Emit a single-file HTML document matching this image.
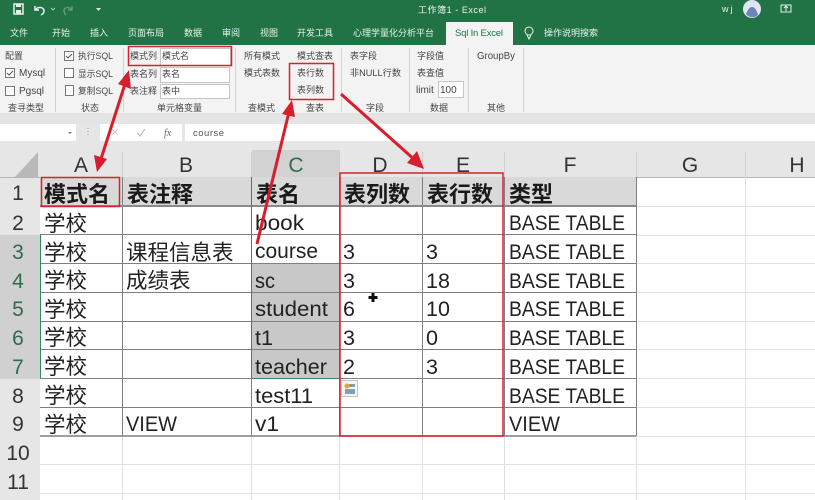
<!DOCTYPE html>
<html><head><meta charset="utf-8"><style>
html,body{margin:0;padding:0;width:815px;height:500px;overflow:hidden;background:#fff}
svg{display:block;filter:blur(.35px)}
text{font-family:"Liberation Sans","Noto Sans CJK SC",sans-serif}
.r{font-size:9px;fill:#454545}
.l{font-size:10px;fill:#454545}
.t{font-size:9px;fill:#e8f2ec}
.c{font-size:21.5px;fill:#222}
.b{font-size:22px;font-weight:bold;fill:#1a1a1a}
.h{font-size:21px;fill:#333;text-anchor:middle}
</style></head><body>
<svg width="815" height="500" viewBox="0 0 815 500" xmlns="http://www.w3.org/2000/svg">
<!-- title + tabs -->
<rect width="815" height="45" fill="#217346"/>
<rect x="14" y="4" width="9" height="10" fill="none" stroke="#e8f2ec" stroke-width="1.5"/>
<rect x="16" y="4" width="5" height="3" fill="#e8f2ec"/><rect x="16" y="10" width="5" height="4" fill="#e8f2ec"/>
<path d="M35 6v4h4M35 10c3-4 9-3 9 1 0 2-1 3-3 4" fill="none" stroke="#e8f2ec" stroke-width="1.5"/>
<path d="M51 8l2 2 2-2" fill="none" stroke="#a9cbb8"/>
<path d="M72 6v4h-4M72 10c-3-4-8-3-8 1 0 2 1 3 2 4" fill="none" stroke="#5f9a7b" stroke-width="1.5"/>
<path d="M96 8h5l-2.500 3z" fill="#d8e8df"/>
<text x="418" y="13" class="t" textLength="68">工作簿1 - Excel</text>
<text x="722" y="12" class="t" style="letter-spacing:2px">wj</text>
<circle cx="752" cy="9" r="9" fill="#dfe6f2"/><path d="M746 14c2-5 4-7 6-7 3 0 5 4 6 8-3 3-9 3-12-1z" fill="#6d84b8"/>
<rect x="781" y="5" width="10" height="7" fill="none" stroke="#e8f2ec"/><path d="M786 6v5M784 8l2-2 2 2" fill="none" stroke="#e8f2ec"/>
<text x="10" y="36" class="t">文件</text><text x="52" y="36" class="t">开始</text><text x="90" y="36" class="t">插入</text>
<text x="128" y="36" class="t">页面布局</text><text x="184" y="36" class="t">数据</text><text x="222" y="36" class="t">审阅</text>
<text x="260" y="36" class="t">视图</text><text x="297" y="36" class="t">开发工具</text><text x="353" y="36" class="t">心理学量化分析平台</text>
<text x="544" y="36" class="t">操作说明搜索</text>
<rect x="446" y="22" width="67" height="23" fill="#f3f3f3"/>
<text x="455" y="36" style="font-size:9.500px;fill:#217346" textLength="48">Sql In Excel</text>
<circle cx="529" cy="31" r="4" fill="none" stroke="#e8f2ec"/><path d="M527 35l2 4 2-4" fill="none" stroke="#e8f2ec"/>
<!-- ribbon -->
<rect y="45" width="815" height="68" fill="#f3f3f3"/>
<rect y="113" width="815" height="11" fill="#e4e4e4"/>
<rect y="124" width="815" height="17" fill="#fff"/>
<rect y="141" width="815" height="36" fill="#e6e6e6"/>
<g stroke="#d2d2d2"><path d="M55.500 48v64M123.500 48v64M235.500 48v64M341.500 48v64M409.500 48v64M468.500 48v64M523.500 48v64"/></g>
<g fill="#fff" stroke="#c6c6c6">
<rect x="160.500" y="48.500" width="70" height="17"/><rect x="160.500" y="67.500" width="69" height="15"/><rect x="160.500" y="84.500" width="69" height="14"/>
<rect x="438.500" y="81.500" width="25" height="16"/>
</g>
<text x="440" y="93" class="l">100</text>
<text x="5" y="59" class="r">配置</text>
<text x="19" y="76" class="l">Mysql</text><text x="19" y="94" class="l">Pgsql</text>
<text x="8" y="111" class="r">查寻类型</text>
<text x="78" y="59" class="r" textLength="35" lengthAdjust="spacingAndGlyphs">执行SQL</text><text x="78" y="77" class="r" textLength="35" lengthAdjust="spacingAndGlyphs">显示SQL</text><text x="78" y="94" class="r" textLength="35" lengthAdjust="spacingAndGlyphs">复制SQL</text>
<text x="81" y="111" class="r">状态</text>
<text x="130" y="59" class="r">模式列</text><text x="130" y="77" class="r">表名列</text><text x="130" y="94" class="r">表注释</text>
<text x="162" y="59" class="r">模式名</text><text x="162" y="77" class="r">表名</text><text x="162" y="94" class="r">表中</text>
<text x="157" y="111" class="r">单元格变量</text>
<text x="244" y="59" class="r">所有模式</text><text x="244" y="76" class="r">模式表数</text><text x="248" y="111" class="r">查模式</text>
<text x="297" y="59" class="r">模式查表</text><text x="297" y="76" class="r">表行数</text><text x="297" y="93" class="r">表列数</text><text x="306" y="111" class="r">查表</text>
<text x="350" y="59" class="r">表字段</text><text x="350" y="76" class="r" textLength="51" lengthAdjust="spacingAndGlyphs">非NULL行数</text><text x="366" y="111" class="r">字段</text>
<text x="417" y="59" class="r">字段值</text><text x="417" y="76" class="r">表查值</text><text x="416" y="93" class="l">limit</text><text x="430" y="111" class="r">数据</text>
<text x="477" y="59" class="l" textLength="38" lengthAdjust="spacingAndGlyphs">GroupBy</text><text x="487" y="111" class="r">其他</text>
<g fill="#fff" stroke="#777">
<rect x="5.500" y="68.500" width="9" height="9"/><rect x="5.500" y="86.500" width="9" height="9"/>
<rect x="64.500" y="51.500" width="9" height="9"/><rect x="64.500" y="68.500" width="9" height="9"/>
<rect x="65.500" y="85.500" width="8" height="10"/>
</g>
<path d="M7 73l2 2 4-4M66 56l2 2 4-4" fill="none" stroke="#555"/>
<!-- formula bar -->
<rect x="76" y="124" width="24" height="17" fill="#e6e6e6"/>
<rect x="182" y="124" width="3" height="17" fill="#e6e6e6"/>
<path d="M68 132h4l-2 2z" fill="#777"/>
<path d="M88 128v1M88 131v1M88 134v1" stroke="#999"/>
<path d="M112 129l6 6M118 129l-6 6" stroke="#c9c9c9"/>
<path d="M137 133l3 3 5-7" fill="none" stroke="#bbb" stroke-width="1.200"/>
<text x="164" y="136" style="font-size:10px;font-style:italic;fill:#666;font-family:'Liberation Serif',serif">fx</text>
<text x="193" y="136" style="font-size:9.500px;fill:#555;letter-spacing:.5px">course</text>
<!-- headers -->
<rect x="0" y="150" width="815" height="27" fill="#e6e6e6"/>
<rect x="0" y="177" width="40" height="323" fill="#e6e6e6"/>
<path d="M15 177L38 152V177z" fill="#b9b9b9"/>
<rect x="252" y="150" width="88" height="27" fill="#d2d2d2"/>
<rect x="0" y="235" width="40" height="144" fill="#d0d0d0"/>
<g stroke="#cfcfcf"><path d="M122.500 152v25M251.500 152v25M339.500 152v25M422.500 152v25M504.500 152v25M636.500 152v25M745.500 152v25"/></g>
<path d="M0 177.500H815" stroke="#b5b5b5"/>
<text x="81" y="172" class="h">A</text><text x="186" y="172" class="h">B</text><text x="296" y="172" class="h" style="fill:#2f6b4c">C</text>
<text x="380" y="172" class="h">D</text><text x="463" y="172" class="h">E</text><text x="570" y="172" class="h">F</text>
<text x="690" y="172" class="h">G</text><text x="797" y="172" class="h">H</text>
<text x="18" y="200" class="h">1</text><text x="18" y="230" class="h">2</text>
<text x="18" y="259" class="h" style="fill:#2f6b4c">3</text><text x="18" y="288" class="h" style="fill:#2f6b4c">4</text>
<text x="18" y="316" class="h" style="fill:#2f6b4c">5</text><text x="18" y="345" class="h" style="fill:#2f6b4c">6</text>
<text x="18" y="374" class="h" style="fill:#2f6b4c">7</text><text x="18" y="403" class="h">8</text><text x="18" y="431" class="h">9</text>
<text x="18" y="460" class="h">10</text><text x="18" y="489" class="h">11</text>
<!-- faint grid -->
<g stroke="#e0e0e0"><path d="M40 464.500H815M40 493.500H815M636.500 177V500M745.500 177V500M122.500 436V500M251.500 436V500M339.500 436V500M422.500 436V500M504.500 436V500M636 206.500H815M636 235.500H815M636 263.500H815M636 292.500H815M636 321.500H815M636 349.500H815M636 378.500H815M636 407.500H815M636 436.500H815"/></g>
<!-- fills -->
<rect x="40" y="177" width="596" height="29" fill="#d9d9d9"/>
<rect x="252" y="264" width="88" height="114" fill="#c8c8c8"/>
<g stroke="#7f7f7f"><path d="M40 206.500H636M40 234.500H636M40 263.500H636M40 292.500H636M40 321.500H636M40 349.500H636M40 378.500H636M40 407.500H636M40 436H636"/>
<path d="M122.500 177V436M251.500 177V436M339.500 177V436M422.500 177V436M504.500 177V436M636.500 177V436"/></g>
<path d="M40 206H636" stroke="#8a8a8a" stroke-width="2"/>
<path d="M40 436H636" stroke="#7f7f7f" stroke-width="1.500"/>
<path d="M40.500 235V378M251.500 177V378M252 378.500H339" stroke="#2e8b5d" fill="none"/>
<!-- text -->
<text x="44" y="202" class="b">模式名</text><text x="127" y="202" class="b">表注释</text><text x="256" y="202" class="b">表名</text>
<text x="344" y="202" class="b">表列数</text><text x="427" y="202" class="b">表行数</text><text x="509" y="202" class="b">类型</text>
<text x="44" y="231" class="c">学校</text><text x="44" y="260" class="c">学校</text><text x="44" y="288" class="c">学校</text><text x="44" y="317" class="c">学校</text>
<text x="44" y="345" class="c">学校</text><text x="44" y="374" class="c">学校</text><text x="44" y="403" class="c">学校</text><text x="44" y="432" class="c">学校</text>
<text x="126" y="260" class="c">课程信息表</text><text x="126" y="288" class="c">成绩表</text>
<text x="126" y="431" class="c" textLength="51" lengthAdjust="spacingAndGlyphs">VIEW</text>
<text x="255" y="230" class="c" textLength="49" lengthAdjust="spacingAndGlyphs">book</text>
<text x="255" y="258" class="c" textLength="63" lengthAdjust="spacingAndGlyphs">course</text>
<text x="255" y="288" class="c" textLength="20" lengthAdjust="spacingAndGlyphs">sc</text>
<text x="255" y="316" class="c" textLength="73" lengthAdjust="spacingAndGlyphs">student</text>
<text x="255" y="345" class="c" textLength="18" lengthAdjust="spacingAndGlyphs">t1</text>
<text x="255" y="374" class="c" textLength="72" lengthAdjust="spacingAndGlyphs">teacher</text>
<text x="255" y="403" class="c" textLength="58" lengthAdjust="spacingAndGlyphs">test11</text>
<text x="255" y="431" class="c" textLength="24" lengthAdjust="spacingAndGlyphs">v1</text>
<text x="343" y="259" class="c">3</text><text x="343" y="288" class="c">3</text><text x="343" y="316" class="c">6</text><text x="343" y="345" class="c">3</text><text x="343" y="374" class="c">2</text>
<text x="426" y="259" class="c">3</text><text x="426" y="288" class="c">18</text><text x="426" y="316" class="c">10</text><text x="426" y="345" class="c">0</text><text x="426" y="374" class="c">3</text>
<text x="509" y="230" class="c" textLength="116" lengthAdjust="spacingAndGlyphs">BASE TABLE</text>
<text x="509" y="259" class="c" textLength="116" lengthAdjust="spacingAndGlyphs">BASE TABLE</text>
<text x="509" y="288" class="c" textLength="116" lengthAdjust="spacingAndGlyphs">BASE TABLE</text>
<text x="509" y="316" class="c" textLength="116" lengthAdjust="spacingAndGlyphs">BASE TABLE</text>
<text x="509" y="345" class="c" textLength="116" lengthAdjust="spacingAndGlyphs">BASE TABLE</text>
<text x="509" y="374" class="c" textLength="116" lengthAdjust="spacingAndGlyphs">BASE TABLE</text>
<text x="509" y="403" class="c" textLength="116" lengthAdjust="spacingAndGlyphs">BASE TABLE</text>
<text x="509" y="431" class="c" textLength="51" lengthAdjust="spacingAndGlyphs">VIEW</text>
<!-- cursor + paste icon -->
<path d="M373 293v9M368.500 297.500h9" stroke="#111" stroke-width="3"/>
<rect x="341.500" y="380.500" width="16" height="16" fill="#f4f4f4" stroke="#c4c4c4"/>
<circle cx="347" cy="386" r="2.500" fill="#e8a33d"/><rect x="345" y="389" width="10" height="5" fill="#7fa1b5"/><rect x="349" y="384" width="6" height="3" fill="#8c9aa6"/>
<!-- red annotations -->
<g fill="none" stroke="#d9202e" stroke-width="1.500">
<rect x="128.500" y="46.500" width="103" height="19"/>
<rect x="289.500" y="63.500" width="44" height="36"/>
<rect x="41.500" y="177.500" width="78" height="29"/>
<rect x="340" y="173" width="163" height="263"/>
</g>
<g stroke="#d81e2c" stroke-width="3" fill="none">
<path d="M125 84L100 162M289 112L257 244M341 94L416 161"/>
</g>
<g fill="#d81e2c">
<path d="M129 70L131 89 118 84z"/><path d="M97 172L94 155 107 159z"/>
<path d="M292 100L295 117 282 114z"/><path d="M424 169L407 163 417 151z"/>
</g>
</svg>
</body></html>
